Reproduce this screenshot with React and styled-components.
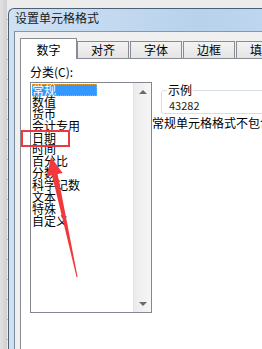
import styled, { createGlobalStyle } from 'styled-components';

const GlobalStyle = createGlobalStyle`
  html, body {
    margin: 0;
    padding: 0;
    overflow: hidden;
  }
  body {
    font-family: "Noto Sans CJK SC", "Noto Sans", sans-serif;
  }
`;

const categories = ["常规", "数值", "货币", "会计专用", "日期", "时间", "百分比", "分数", "科学记数", "文本", "特殊", "自定义"];
const tabs = ["数字", "对齐", "字体", "边框", "填充"];

// Excel sheet behind the dialog
const Stage = styled.div`
  position: relative;
  width: 262px;
  height: 349px;
  overflow: hidden;
  box-sizing: border-box;
  padding: 8px 0 0 8px;
  background-color: #ececec;
  background-image:
    linear-gradient(to right, #e2e2e2 0, #d0d0d0 7px, transparent 7px),
    repeating-linear-gradient(to bottom, transparent 0 19px, #b5b5b5 19px 20px);
`;

const Window = styled.div`
  display: flex;
  flex-direction: column;
  width: 320px;
  height: 360px;
  box-sizing: border-box;
  border: 1px solid #4d5f73;
  border-right: none;
  border-bottom: none;
  border-top-left-radius: 6px;
  background: linear-gradient(to right, #cfe1f4, #b8d2ec 60%, #c4daf1);
  overflow: hidden;
`;

const TitleBar = styled.div`
  height: 22px;
  box-sizing: border-box;
  padding: 1px 0 0 6px;
  font-size: 12px;
  line-height: 16px;
  color: #1a1a1a;
`;

const FrameBody = styled.div`
  flex: 1;
  display: flex;
  padding-left: 5px;
`;

const Client = styled.div`
  flex: 1;
  display: flex;
  flex-direction: column;
  border-top: 1px solid #8796a8;
  border-left: 1px solid #7f8c99;
  background: #f0f0f0;
  padding: 6px 0 0 5px;
`;

const TabRow = styled.div`
  display: flex;
  align-items: flex-end;
  gap: 1px;
  height: 21px;
  margin-bottom: -1px;
  position: relative;
  z-index: 1;
`;

const Tab = styled.div`
  box-sizing: border-box;
  width: ${p => (p.$active ? 57 : 52)}px;
  height: ${p => (p.$active ? 21 : 17)}px;
  margin-bottom: ${p => (p.$active ? 0 : 1)}px;
  margin-left: ${p => (p.$first ? -1 : 0)}px;
  border: 1px solid #898c95;
  border-bottom: none;
  background: ${p => (p.$active ? '#ffffff' : 'linear-gradient(to bottom, #f3f3f3, #e4e4e4)')};
  font-size: 12px;
  line-height: ${p => (p.$active ? 22 : 16)}px;
  text-align: center;
  color: #000;
  overflow: hidden;
  white-space: nowrap;
`;

const Panel = styled.div`
  flex: 1;
  background: #fff;
  border-top: 1px solid #898c95;
  border-left: 1px solid #898c95;
  padding: 7px 0 0 9px;
`;

const PanelRow = styled.div`
  display: flex;
  align-items: flex-start;
`;

const LeftCol = styled.div`
  display: flex;
  flex-direction: column;
`;

const Label = styled.div`
  font-size: 12px;
  line-height: 12px;
  margin-bottom: 4px;
  color: #000;
`;

const ListBox = styled.div`
  display: flex;
  width: 122px;
  height: 231px;
  box-sizing: border-box;
  border: 1px solid #828790;
`;

const Items = styled.div`
  flex: 1;
  padding: 1px 0 0 1px;
`;

const Item = styled.div`
  box-sizing: border-box;
  width: ${p => (p.$selected ? '65px' : 'auto')};
  height: 11.9px;
  font-size: 12px;
  line-height: 12px;
  color: ${p => (p.$selected ? '#fff' : '#000')};
  background: ${p => (p.$selected ? '#3399ff' : 'transparent')};
  outline: ${p => (p.$selected ? '1px dotted #e8a030' : 'none')};
  outline-offset: -1px;
  white-space: nowrap;
`;

const Scrollbar = styled.div`
  width: 17px;
  display: flex;
  flex-direction: column;
  justify-content: space-between;
  align-items: center;
  border-left: 1px solid #e4e4e4;
  background: linear-gradient(to right, #ececec, #f6f6f6);
`;

const ScrollArrow = styled.div`
  display: flex;
  align-items: center;
  justify-content: center;
  width: 17px;
  height: 17px;

  &::after {
    content: "";
    width: 0;
    height: 0;
    border-left: 4px solid transparent;
    border-right: 4px solid transparent;
    ${p => (p.$down ? 'border-top: 4px solid #6a6a6a;' : 'border-bottom: 4px solid #6a6a6a;')}
  }
`;

const RightCol = styled.div`
  width: 200px;
  margin-top: 18px;
`;

const GroupBox = styled.fieldset`
  margin: 0 0 0 9px;
  padding: 0 0 1px 5px;
  border: 1px solid #d5dfe5;
  border-radius: 3px;
`;

const Legend = styled.legend`
  padding: 0 1px;
  font-size: 12px;
  line-height: 12px;
  color: #000;
`;

const Sample = styled.div`
  margin: 3px 0 0 2px;
  font-size: 11px;
  line-height: 13px;
  color: #1a1a1a;
`;

const Description = styled.div`
  margin-top: 3px;
  font-size: 12px;
  line-height: 12px;
  white-space: nowrap;
  color: #000;
`;

// red annotation drawn over the dialog
const HighlightBox = styled.div`
  position: absolute;
  left: 21px;
  top: 130px;
  width: 49px;
  height: 17px;
  box-sizing: border-box;
  border: 2px solid #ea3a3e;
`;

const ArrowLayer = styled.svg`
  position: absolute;
  left: 0;
  top: 0;
  pointer-events: none;
`;

export default function App() {
  return (
    <>
      <GlobalStyle />
      <Stage>
        <Window>
          <TitleBar>设置单元格格式</TitleBar>
          <FrameBody>
            <Client>
              <TabRow>
                {tabs.map((t, i) => (
                  <Tab key={t} $active={i === 0} $first={i === 1}>{t}</Tab>
                ))}
              </TabRow>
              <Panel>
                <PanelRow>
                  <LeftCol>
                    <Label>分类(C):</Label>
                    <ListBox>
                      <Items>
                        {categories.map((c, i) => (
                          <Item key={c} $selected={i === 0}>{c}</Item>
                        ))}
                      </Items>
                      <Scrollbar>
                        <ScrollArrow />
                        <ScrollArrow $down />
                      </Scrollbar>
                    </ListBox>
                  </LeftCol>
                  <RightCol>
                    <GroupBox>
                      <Legend>示例</Legend>
                      <Sample>43282</Sample>
                    </GroupBox>
                    <Description>常规单元格格式不包含任何特定的数字格式。</Description>
                  </RightCol>
                </PanelRow>
              </Panel>
            </Client>
          </FrameBody>
        </Window>
        <HighlightBox />
        <ArrowLayer width="262" height="349" viewBox="0 0 262 349">
          <polygon
            points="51,157 62.6,173 57.6,174 77.6,277 76.6,277.2 52,175.2 47,176.3"
            fill="#f2383d"
          />
        </ArrowLayer>
      </Stage>
    </>
  );
}
